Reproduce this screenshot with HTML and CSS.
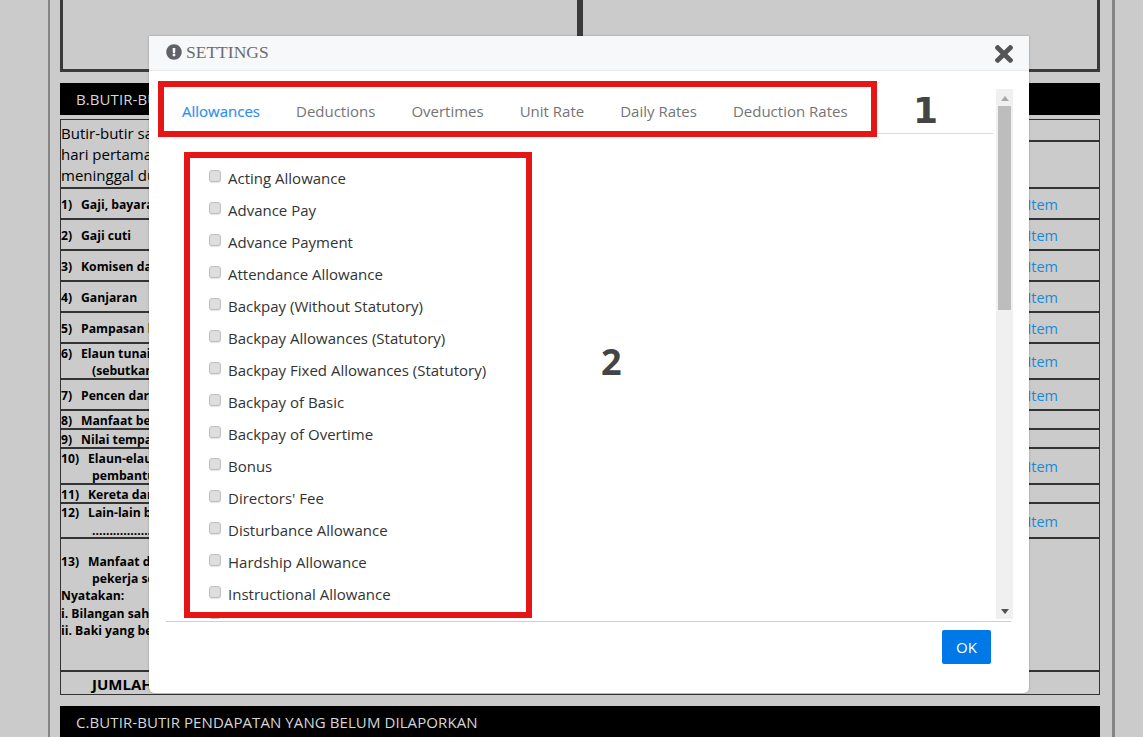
FILE: index.html
```html
<!DOCTYPE html>
<html lang="ms">
<head>
<meta charset="utf-8">
<title>Settings</title>
<link rel="stylesheet" href="styles.css">
</head>
<body>
<div class="sheet">
  <div class="topbox"><div class="topcell"></div><div class="topcell"></div></div>
  <div class="band band-b">B.BUTIR-BUTIR PENDAPATAN</div>
  <div class="table">
    <div class="row h69 intro"><div>Butir-butir sara hidup pekerja<br>hari pertama penggajian atau<br>meninggal dunia</div><div class="intro-side"><div class="intro-side-top"></div></div></div>
    <div class="row h31"><b><span class="n">1)</span>Gaji, bayaran</b><a>Item</a></div>
    <div class="row h31"><b><span class="n">2)</span>Gaji cuti</b><a>Item</a></div>
    <div class="row h31"><b><span class="n">3)</span>Komisen dan</b><a>Item</a></div>
    <div class="row h31"><b><span class="n">4)</span>Ganjaran</b><a>Item</a></div>
    <div class="row h31"><b><span class="n">5)</span>Pampasan kerja</b><a>Item</a></div>
    <div class="row h36"><b><span class="n">6)</span>Elaun tunai<br><span class="ind">(sebutkan)</span></b><a>Item</a></div>
    <div class="row h31"><b><span class="n">7)</span>Pencen dari</b><a>Item</a></div>
    <div class="row h19"><b><span class="n">8)</span>Manfaat berupa</b></div>
    <div class="row h19"><b><span class="n">9)</span>Nilai tempat</b></div>
    <div class="row h36"><b><span class="n n2">10)</span>Elaun-elaun<br><span class="ind">pembantu</span></b><a>Item</a></div>
    <div class="row h19"><b><span class="n n2">11)</span>Kereta dan</b></div>
    <div class="row h35"><b><span class="n n2">12)</span>Lain-lain bayaran<br><span class="ind">.............................</span></b><a>Item</a></div>
    <div class="row h133 top"><b><span class="n n2">13)</span>Manfaat dibayar<br><span class="ind">pekerja semasa</span><br>Nyatakan:<br>i. Bilangan saham<br>ii. Baki yang belum</b></div>
    <div class="row h24 total"><b>JUMLAH</b></div>
  </div>
  <div class="band band-c">C.BUTIR-BUTIR PENDAPATAN YANG BELUM DILAPORKAN</div>
</div>

<div class="modal">
  <header class="modal-head">
    <h5 class="modal-title">
      <svg class="info" viewBox="0 0 512 512" aria-hidden="true"><path d="M504 256c0 136.997-111.043 248-248 248S8 392.997 8 256C8 119.083 119.043 8 256 8s248 111.083 248 248zm-248 50c-25.405 0-46 20.595-46 46s20.595 46 46 46 46-20.595 46-46-20.595-46-46-46zm-43.673-165.346l7.418 136c.347 6.364 5.609 11.346 11.982 11.346h48.546c6.373 0 11.635-4.982 11.982-11.346l7.418-136c.375-6.874-5.098-12.654-11.982-12.654h-63.383c-6.884 0-12.356 5.78-11.981 12.654z"/></svg>
      SETTINGS
    </h5>
    <svg class="close" viewBox="0 80 352 352" aria-hidden="true"><path d="M242.72 256l100.07-100.07c12.28-12.28 12.28-32.19 0-44.48l-22.24-22.24c-12.28-12.28-32.19-12.28-44.48 0L176 189.28 75.93 89.21c-12.28-12.28-32.19-12.28-44.48 0L9.21 111.45c-12.28 12.28-12.28 32.19 0 44.48L109.28 256 9.21 356.07c-12.28 12.28-12.28 32.19 0 44.48l22.24 22.24c12.28 12.28 32.2 12.28 44.48 0L176 322.72l100.07 100.07c12.28 12.28 32.2 12.28 44.48 0l22.24-22.24c12.28-12.28 12.28-32.19 0-44.48L242.72 256z"/></svg>
  </header>
  <div class="modal-body">
    <div class="pane">
      <nav class="tabs">
        <a class="tab active">Allowances</a>
        <a class="tab">Deductions</a>
        <a class="tab">Overtimes</a>
        <a class="tab">Unit Rate</a>
        <a class="tab">Daily Rates</a>
        <a class="tab">Deduction Rates</a>
      </nav>
      <ul class="list">
        <li><span class="box"></span>Acting Allowance</li>
        <li><span class="box"></span>Advance Pay</li>
        <li><span class="box"></span>Advance Payment</li>
        <li><span class="box"></span>Attendance Allowance</li>
        <li><span class="box"></span>Backpay (Without Statutory)</li>
        <li><span class="box"></span>Backpay Allowances (Statutory)</li>
        <li><span class="box"></span>Backpay Fixed Allowances (Statutory)</li>
        <li><span class="box"></span>Backpay of Basic</li>
        <li><span class="box"></span>Backpay of Overtime</li>
        <li><span class="box"></span>Bonus</li>
        <li><span class="box"></span>Directors' Fee</li>
        <li><span class="box"></span>Disturbance Allowance</li>
        <li><span class="box"></span>Hardship Allowance</li>
        <li><span class="box"></span>Instructional Allowance</li>
        <li><span class="box"></span></li>
      </ul>
    </div>
    <div class="scrollbar">
      <span class="arrow up"></span>
      <span class="thumb"></span>
      <span class="arrow down"></span>
    </div>
  </div>
  <footer class="modal-foot"><button class="ok">OK</button></footer>
</div>

<div class="mark mark-1"></div>
<div class="mark mark-2"></div>
<div class="num num-1">1</div>
<div class="num num-2">2</div>
</body>
</html>
```
FILE: styles.css
```css
* { box-sizing: border-box; }
html, body { height: 100%; }
body {
  margin: 0;
  background: #cbcbcb;
  overflow: hidden;
  font-family: "Open Sans", "Noto Sans", sans-serif;
  color: #000;
}
.sheet {
  width: 1067px;
  height: 737px;
  margin-left: 48px;
  padding: 0 12px 0 10px;
  border-left: 2px solid #858585;
  border-right: 3px solid #858585;
  overflow: hidden;
}
.topbox {
  display: flex;
  height: 72px;
  border: 3px solid #3a3a3a;
  border-top: 0;
}
.topcell { flex: 1; }
.topcell + .topcell { border-left: 6px solid #3a3a3a; }
.band {
  height: 32px;
  padding-left: 16px;
  background: #000;
  color: #d6d6d6;
  font-size: 15px;
  letter-spacing: .085px;
  line-height: 32px;
  white-space: nowrap;
}
.band-b { margin-top: 11px; }
.band-c { margin-top: 11px; }
.table {
  margin-top: 4px;
  border: 1px solid #333;
  height: 576px;
}
.row {
  display: flex;
  justify-content: space-between;
  padding: 2px 41px 0 0;
  align-items: center;
  border-bottom: 2px solid #333;
  font-size: 12.2px;
  line-height: 17.2px;
  color: #000;
  white-space: nowrap;
}
.row:last-child { border-bottom: 0; }
.row b { font-weight: 700; }
.row a { color: #1b8ad3; font-size: 14.5px; }
.n { display: inline-block; width: 20px; }
.n2 { width: 27px; }
.ind { padding-left: 31px; }
.intro {
  align-items: flex-start;
  padding: 3px 0 0;
  font-size: 15px;
  line-height: 21px;
}
.intro-side { flex: none; width: 71px; margin-top: -3px; }
.intro-side-top { height: 22px; border-bottom: 2px solid #333; }
.top { align-items: flex-start; padding-top: 14px; }
.total b { padding-left: 31px; font-size: 15px; }
.h19 { height: 19px; }
.h24 { height: 24px; }
.h31 { height: 31px; }
.h35 { height: 35px; }
.h36 { height: 36px; }
.h69 { height: 69px; }
.h133 { height: 133px; }

.modal {
  position: absolute;
  left: 149px;
  top: 36px;
  width: 880px;
  height: 657px;
  display: flex;
  flex-direction: column;
  background: #fff;
  border-radius: 0 0 5px 5px;
  box-shadow: 0 0 2px rgba(0, 0, 0, .35);
}
.modal-head {
  display: flex;
  align-items: center;
  justify-content: space-between;
  flex: none;
  height: 35px;
  padding: 0 16px 0 17px;
  background: #f7f8fa;
  border-bottom: 1px solid #e6e8ea;
}
.modal-title {
  display: flex;
  align-items: center;
  gap: 4px;
  margin: -2px 0 0;
  font-family: "Liberation Serif", serif;
  font-size: 17.5px;
  font-weight: 400;
  color: #6c6c6c;
}
.info { width: 16px; height: 16px; margin-top: -1px; fill: #5f6368; }
.close { width: 18px; height: 18px; margin-top: 1px; fill: #555; }
.modal-body {
  flex: none;
  display: flex;
  height: 530px;
  margin: 18px 16px 0 17px;
  gap: 2px;
  overflow: hidden;
}
.pane { flex: 1; min-width: 0; overflow: hidden; }
.tabs {
  display: flex;
  gap: 36px;
  height: 45px;
  padding: 13px 16px 0;
  border-bottom: 1px solid #dedede;
}
.tab { font-size: 15px; line-height: 18px; color: #757575; white-space: nowrap; }
.tab.active { color: #2f8fef; -webkit-text-stroke: .2px #2f8fef; }
.list { margin: 28px 0 0; padding: 0 0 0 43px; list-style: none; }
.list li {
  display: flex;
  align-items: center;
  height: 32px;
  font-size: 15px;
  color: #333;
  white-space: nowrap;
}
.box {
  width: 12px;
  height: 12px;
  margin-right: 7px;
  margin-top: -4px;
  background: #dedede;
  border: 1px solid #bfbfbf;
  border-radius: 3px;
  box-shadow: 0 1px 1px rgba(0, 0, 0, .12);
}
.scrollbar {
  flex: none;
  display: flex;
  flex-direction: column;
  align-items: center;
  width: 17px;
  background: #f0f0f0;
}
.thumb { width: 13px; height: 204px; background: #bdbdbd; }
.arrow { flex: none; width: 0; height: 0; border-left: 4px solid transparent; border-right: 4px solid transparent; }
.arrow.up { margin: 7px 0 5px; border-bottom: 5px solid #a8a8a8; }
.arrow.down { margin: auto 0 5px; border-top: 5px solid #505050; }
.modal-foot {
  flex: none;
  display: flex;
  justify-content: flex-end;
  align-items: flex-start;
  height: 72px;
  margin: 2px 18px 0 17px;
  padding: 8px 20px 0 0;
  border-top: 1px solid #cfcfcf;
}
.ok {
  width: 49px;
  height: 34px;
  padding: 0;
  border: 0;
  border-radius: 2px;
  background: #0078e7;
  color: #fff;
  font: 15px "Open Sans", sans-serif;
}
.mark { position: absolute; border: 6px solid #e71616; }
.mark-1 { left: 158px; top: 81px; width: 719px; height: 56px; }
.mark-2 { left: 184px; top: 152px; width: 348px; height: 466px; }
.num { position: absolute; font-size: 36px; line-height: 40px; font-weight: 700; color: #444; }
.num-1 { left: 913px; top: 91px; font-family: "DejaVu Sans", sans-serif; }
.num-2 { left: 601px; top: 342px; }
```
